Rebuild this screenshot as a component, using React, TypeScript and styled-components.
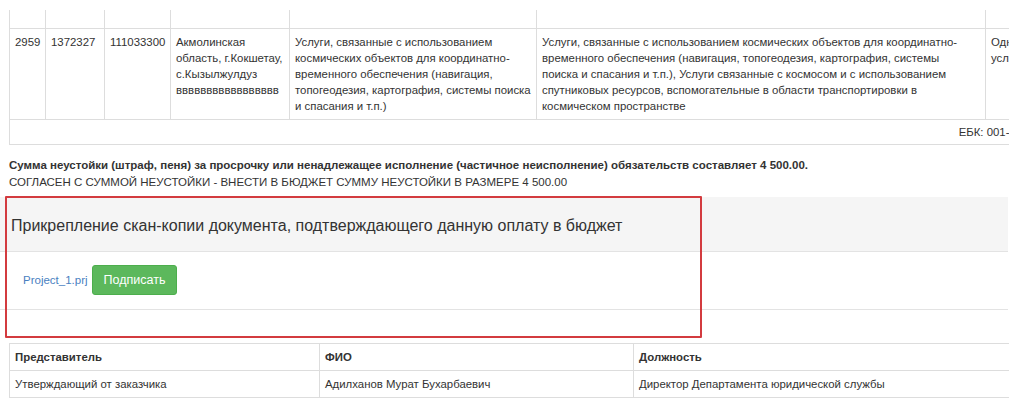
import React from 'react';
import styled, { createGlobalStyle } from 'styled-components';

const GlobalStyle = createGlobalStyle`
  body {
    margin: 0;
    background: #ffffff;
    font-family: "Liberation Sans", Arial, sans-serif;
    color: #333333;
  }
`;

const Page = styled.div`
  position: relative;
  width: 1009px;
  height: 398px;
  overflow: hidden;
  padding-top: 10px;
  box-sizing: border-box;
`;

const Indent = styled.div`
  padding-left: 9px;
`;

const Table = styled.table`
  width: 1000px;
  table-layout: fixed;
  border-collapse: collapse;
  font-size: 11.4px;
  line-height: 16px;
  color: #333333;
`;

const Cell = styled.td<{ $align?: string; $bold?: boolean }>`
  border: 1px solid #dddddd;
  padding: 5px;
  vertical-align: top;
  text-align: ${(p) => p.$align || 'left'};
  font-weight: ${(p) => (p.$bold ? 'bold' : 'normal')};
  overflow: hidden;
  white-space: normal;
  &:last-child {
    border-right: none;
  }
`;

const EmptyRow = styled.tr`
  height: 18px;
  td {
    border-top: none;
    padding: 0;
  }
`;

const TotalCell = styled(Cell)`
  padding: 4px 0 4px 5px;
  white-space: nowrap;
`;

const Notice = styled.div`
  margin: 12px 0 6px 9px;
  font-size: 11.5px;
  line-height: 17px;
  color: #333333;
`;

const Strong = styled.div`
  font-weight: bold;
`;

const Panel = styled.div`
  width: 1008px;
  background: #ffffff;
`;

const PanelHeading = styled.div`
  height: 55px;
  box-sizing: border-box;
  display: flex;
  align-items: center;
  padding: 4px 11px 0;
  background: #f5f5f5;
  border-bottom: 1px solid #e3e3e3;
  font-size: 16px;
  color: #333333;
`;

const PanelBody = styled.div`
  height: 57px;
  display: flex;
  align-items: center;
  gap: 4px;
  padding: 0 23px;
  border-bottom: 1px solid #e3e3e3;
`;

const FileLink = styled.a`
  font-size: 11.5px;
  color: #4a7fc1;
  text-decoration: none;
`;

const SignButton = styled.button`
  height: 30px;
  padding: 0 11px;
  border: 1px solid #4cae4c;
  border-radius: 3px;
  background: #5cb85c;
  color: #ffffff;
  font-family: "Liberation Sans", Arial, sans-serif;
  font-size: 12.5px;
`;

const PanelFooter = styled.div`
  height: 27px;
`;

const People = styled(Table)`
  margin-top: 6px;
`;

const PeopleCell = styled(Cell)`
  padding: 5px;
  height: 15px;
`;

const Highlight = styled.div`
  position: absolute;
  left: 5px;
  top: 196px;
  width: 693px;
  height: 138px;
  border: 2px solid #d33b3f;
  border-radius: 1px;
  pointer-events: none;
`;

const widths = [36, 59, 66, 119, 247, 449, 24];

const serviceShort = [
  'Услуги, связанные с использованием',
  'космических объектов для координатно-',
  'временного обеспечения (навигация,',
  'топогеодезия, картография, системы поиска',
  'и спасания и т.п.)',
];

const serviceLong = [
  'Услуги, связанные с использованием космических объектов для координатно-',
  'временного обеспечения (навигация, топогеодезия, картография, системы',
  'поиска и спасания и т.п.), Услуги связанные с космосом и с использованием',
  'спутниковых ресурсов, вспомогательные в области транспортировки в',
  'космическом пространстве',
];

const Lines = ({ lines }: { lines: string[] }) => (
  <>
    {lines.map((l, i) => (
      <React.Fragment key={i}>
        {l}
        {i < lines.length - 1 && <br />}
      </React.Fragment>
    ))}
  </>
);

export default function App() {
  return (
    <>
      <GlobalStyle />
      <Page>
        <Indent>
          <Table>
            <colgroup>
              {widths.map((w, i) => (
                <col key={i} style={{ width: w }} />
              ))}
            </colgroup>
            <tbody>
              <EmptyRow>
                {widths.map((_, i) => (
                  <Cell key={i} />
                ))}
              </EmptyRow>
              <tr>
                <Cell>2959</Cell>
                <Cell>1372327</Cell>
                <Cell>111033300</Cell>
                <Cell>
                  Акмолинская область, г.Кокшетау, с.Кызылжулдуз ввввввввввввввввв
                </Cell>
                <Cell>
                  <Lines lines={serviceShort} />
                </Cell>
                <Cell>
                  <Lines lines={serviceLong} />
                </Cell>
                <Cell style={{ whiteSpace: 'nowrap' }}>
                  Одн
                  <br />
                  усл
                </Cell>
              </tr>
              <tr>
                <TotalCell colSpan={7} $align="right">
                  ЕБК: 001-
                </TotalCell>
              </tr>
            </tbody>
          </Table>
        </Indent>

        <Notice>
          <Strong>
            Сумма неустойки (штраф, пеня) за просрочку или ненадлежащее исполнение (частичное
            неисполнение) обязательств составляет 4 500.00.
          </Strong>
          <div>СОГЛАСЕН С СУММОЙ НЕУСТОЙКИ - ВНЕСТИ В БЮДЖЕТ СУММУ НЕУСТОЙКИ В РАЗМЕРЕ 4 500.00</div>
        </Notice>

        <Panel>
          <PanelHeading>
            Прикрепление скан-копии документа, подтверждающего данную оплату в бюджет
          </PanelHeading>
          <PanelBody>
            <FileLink href="#">Project_1.prj</FileLink>
            <SignButton>Подписать</SignButton>
          </PanelBody>
          <PanelFooter />
        </Panel>

        <Indent>
          <People>
            <colgroup>
              <col style={{ width: 310 }} />
              <col style={{ width: 314 }} />
              <col style={{ width: 376 }} />
            </colgroup>
            <tbody>
              <tr>
                <PeopleCell $bold>Представитель</PeopleCell>
                <PeopleCell $bold>ФИО</PeopleCell>
                <PeopleCell $bold>Должность</PeopleCell>
              </tr>
              <tr>
                <PeopleCell>Утверждающий от заказчика</PeopleCell>
                <PeopleCell>Адилханов Мурат Бухарбаевич</PeopleCell>
                <PeopleCell>Директор Департамента юридической службы</PeopleCell>
              </tr>
            </tbody>
          </People>
        </Indent>

        <Highlight />
      </Page>
    </>
  );
}
